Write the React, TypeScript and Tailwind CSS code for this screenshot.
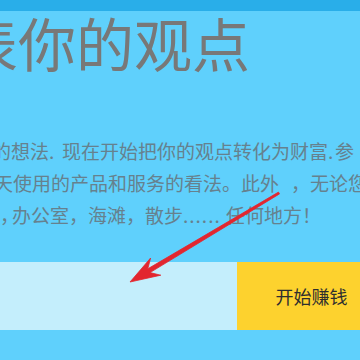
import React from "react";

function Arrow() {
  return (
    <svg
      className="absolute left-0 top-0 pointer-events-none"
      width="360"
      height="360"
      viewBox="0 0 360 360"
    >
      <polygon
        points="279.5,193.9 150,272.6 160.8,275.2 130,282 150.6,258 147.8,268.8 278.5,192.1"
        fill="#e2262f"
        stroke="#e2262f"
        strokeWidth="0.8"
        strokeLinejoin="round"
      />
    </svg>
  );
}

function App() {
  return (
    <div className="relative w-[360px] h-[360px] overflow-hidden bg-[#5fd0fc] font-['Noto_Sans_CJK_SC','Noto_Sans',sans-serif]">
      <div className="h-[11px] bg-[#29aee9]" />
      <h1 className="mt-[2px] -ml-[98px] whitespace-nowrap text-[58px] leading-[58px] font-normal text-[#787878]">
        发表你的观点
      </h1>
      <div className="mt-[64px] text-[19px] leading-[32px] text-[#66818e] whitespace-nowrap">
        <div className="-ml-[8px]">
          的想法<span className="inline-block w-[13px]">.</span>
          现在开始把你的观点转化为财富
          <span className="inline-block w-[7px]">.</span>参
        </div>
        <div className="-ml-[6px]">
          天使用的产品和服务的看法。此外<span className="ml-[12px]">，</span>
          无论您
        </div>
        <div>
          <span className="inline-block w-[12px]">，</span>办公室，海滩，散步
          <span className="inline-block w-[43px] tracking-[1px]">......</span>
          任何地方！
        </div>
      </div>
      <div className="mt-[31px] flex h-[68px]">
        <div className="w-[237px] shrink-0 bg-[#c4eefc]" />
        <button className="w-[149px] shrink-0 bg-[#fdd22e] text-[18px] text-[#2e2e2e] flex items-center justify-center">
          开始赚钱
        </button>
      </div>
      <Arrow />
    </div>
  );
}

export default App;
